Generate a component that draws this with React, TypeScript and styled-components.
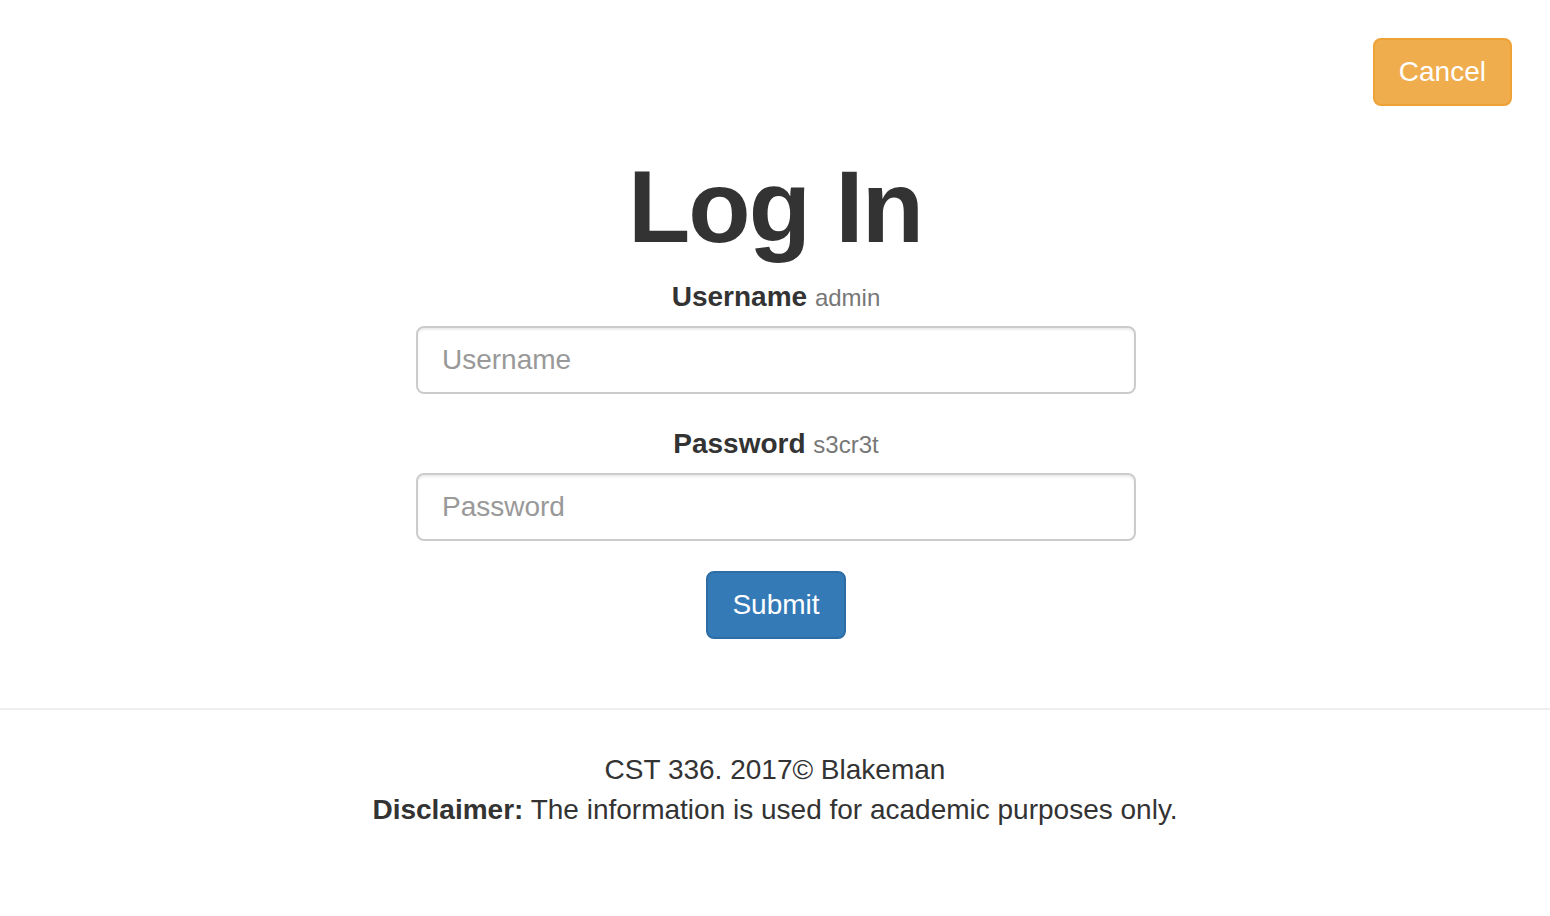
import React from "react";
import styled, { createGlobalStyle } from "styled-components";

const GlobalStyle = createGlobalStyle`
  html, body {
    margin: 0;
    padding: 0;
    background: #ffffff;
  }
  body {
    font-family: "Liberation Sans", Arial, Helvetica, sans-serif;
    font-size: 28px;
    line-height: 40px;
    color: #333333;
  }
  * { box-sizing: border-box; }
`;

const Page = styled.div`
  width: 100%;
  min-height: 916px;
  display: flex;
  flex-direction: column;
`;

const TopBar = styled.div`
  display: flex;
  justify-content: flex-end;
  padding: 38px 38px 0;
`;

const Button = styled.button<{ $variant: "warning" | "primary" }>`
  font-family: "Liberation Sans", Arial, Helvetica, sans-serif;
  font-size: 28px;
  line-height: 40px;
  height: 68px;
  padding: 12px 24px;
  border-radius: 8px;
  border: 2px solid ${(p) => (p.$variant === "warning" ? "#eea236" : "#2e6da4")};
  background: ${(p) => (p.$variant === "warning" ? "#f0ad4e" : "#337ab7")};
  color: #ffffff;
  cursor: pointer;
`;

const Main = styled.main`
  display: flex;
  flex-direction: column;
  align-items: center;
`;

const Title = styled.h1`
  margin: 45px 0 14px;
  font-size: 102px;
  line-height: 1.1;
  font-weight: 700;
  letter-spacing: -2px;
  color: #333333;
`;

const Form = styled.form`
  width: 720px;
  margin-left: 2px;
  display: flex;
  flex-direction: column;
  align-items: center;
`;

const FormGroup = styled.div`
  width: 100%;
  display: flex;
  flex-direction: column;
  align-items: center;
  margin-bottom: 30px;
`;

const Label = styled.label`
  font-weight: 700;
  font-size: 28px;
  line-height: 40px;
  margin-bottom: 8px;
`;

const Hint = styled.span`
  font-weight: 400;
  font-size: 24px;
  color: #777777;
`;

const Input = styled.input`
  width: 100%;
  height: 68px;
  padding: 12px 24px;
  font-family: "Liberation Sans", Arial, Helvetica, sans-serif;
  font-size: 28px;
  line-height: 40px;
  color: #555555;
  background: #ffffff;
  border: 2px solid #cccccc;
  border-radius: 8px;
  box-shadow: inset 0 2px 2px rgba(0, 0, 0, 0.075);
  outline: none;
  &::placeholder {
    color: #999999;
  }
`;

const Rule = styled.hr`
  width: 100%;
  margin: 69px 0 40px;
  border: 0;
  border-top: 2px solid #eeeeee;
`;

const Footer = styled.footer`
  text-align: center;
  font-size: 28px;
  line-height: 40px;
`;

const Line = styled.div``;

export default function App() {
  return (
    <>
      <GlobalStyle />
      <Page>
        <TopBar>
          <Button type="button" $variant="warning">Cancel</Button>
        </TopBar>
        <Main>
          <Title>Log In</Title>
          <Form onSubmit={(e) => e.preventDefault()}>
            <FormGroup>
              <Label htmlFor="username">
                Username <Hint>admin</Hint>
              </Label>
              <Input id="username" type="text" placeholder="Username" />
            </FormGroup>
            <FormGroup>
              <Label htmlFor="password">
                Password <Hint>s3cr3t</Hint>
              </Label>
              <Input id="password" type="password" placeholder="Password" />
            </FormGroup>
            <Button type="submit" $variant="primary">Submit</Button>
          </Form>
        </Main>
        <Rule />
        <Footer>
          <Line>CST 336. 2017© Blakeman</Line>
          <Line>
            <strong>Disclaimer:</strong> The information is used for academic purposes only.
          </Line>
        </Footer>
      </Page>
    </>
  );
}
